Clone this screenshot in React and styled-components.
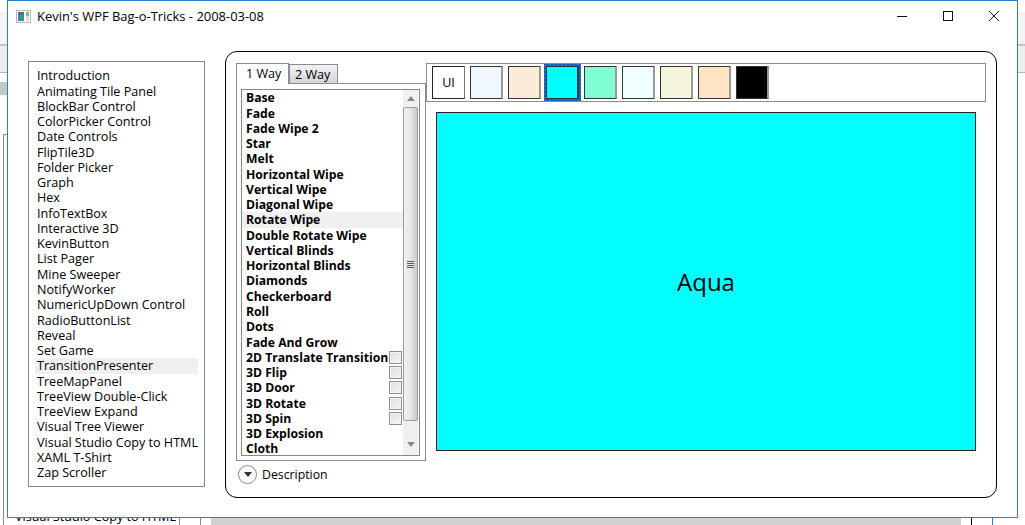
import React from "react";
import styled, { createGlobalStyle } from "styled-components";

const demos = ["Introduction","Animating Tile Panel","BlockBar Control","ColorPicker Control","Date Controls","FlipTile3D","Folder Picker","Graph","Hex","InfoTextBox","Interactive 3D","KevinButton","List Pager","Mine Sweeper","NotifyWorker","NumericUpDown Control","RadioButtonList","Reveal","Set Game","TransitionPresenter","TreeMapPanel","TreeView Double-Click","TreeView Expand","Visual Tree Viewer","Visual Studio Copy to HTML","XAML T-Shirt","Zap Scroller"];
const transitions = [["Base"],["Fade"],["Fade Wipe 2"],["Star"],["Melt"],["Horizontal Wipe"],["Vertical Wipe"],["Diagonal Wipe"],["Rotate Wipe"],["Double Rotate Wipe"],["Vertical Blinds"],["Horizontal Blinds"],["Diamonds"],["Checkerboard"],["Roll"],["Dots"],["Fade And Grow"],["2D Translate Transition",1],["3D Flip",1],["3D Door",1],["3D Rotate",1],["3D Spin",1],["3D Explosion"],["Cloth"]];
const colors = ["#f0f8ff","#faebd7","#00ffff","#7fffd4","#f0ffff","#f5f5dc","#ffe4c4","#000000"];

export default function App() {
  return (
    <>
      <GlobalStyle />
      <Desktop>
        <BackStrip $top={12} $height={32} $left={0} $width={7} />
        <BackBar $left={0} $width={7} />
        <BackStrip $top={12} $height={32} $left={1018} $width={7} />
        <BackBar $left={1018} $width={7} />
        <BackIcon />
        <BackCorner />
        <BackLine $left={179} $top={518} $color="#888" />
        <BackLine $left={200} $top={518} $color="#888" />
        <BackLine $left={971} $top={518} $color="#000" />
        <BackLine $left={992} $top={518} $color="#2b7fd0" />
        <BackGray />
        <BackText>Visual Studio Copy to HTML</BackText>
        <Window>
          <TitleBar>
            <AppIcon viewBox="0 0 15 13">
              <rect x="0.5" y="0.5" width="14" height="12" fill="#fff" stroke="#b9b9b9" />
              <rect x="2" y="2" width="6" height="9" fill="#3f8f9a" />
              <rect x="2" y="2" width="6" height="3" fill="#3f6fa8" />
              <rect x="10" y="2" width="3" height="4" fill="#7fbf8f" />
              <rect x="10" y="6" width="3" height="5" fill="#d5ded5" />
            </AppIcon>
            <Title>Kevin's WPF Bag-o-Tricks - 2008-03-08</Title>
            <Caption>
              <CaptionButton>
                <svg width="12" height="12" viewBox="0 0 12 12"><path d="M1 6.5h10" stroke="#111" fill="none" /></svg>
              </CaptionButton>
              <CaptionButton>
                <svg width="12" height="12" viewBox="0 0 12 12"><rect x="1.5" y="1.5" width="9" height="9" stroke="#111" fill="none" /></svg>
              </CaptionButton>
              <CaptionButton>
                <svg width="12" height="12" viewBox="0 0 12 12"><path d="M1 1l10 10M11 1L1 11" stroke="#111" fill="none" /></svg>
              </CaptionButton>
            </Caption>
          </TitleBar>
          <Body>
            <DemoList>
              {demos.map((d) => (
                <DemoItem key={d} $selected={d === "TransitionPresenter"}>{d}</DemoItem>
              ))}
            </DemoList>
            <Panel>
              <LeftColumn>
                <Tabs>
                  <Tab $active>1 Way</Tab>
                  <Tab>2 Way</Tab>
                </Tabs>
                <TabPanel>
                  <ListFrame>
                    <TransitionList>
                      {transitions.map(([name, check]) => (
                        <TransitionItem key={name} $selected={name === "Rotate Wipe"}>
                          <span>{name}</span>
                          {check && <CheckBox />}
                        </TransitionItem>
                      ))}
                    </TransitionList>
                    <ScrollBar>
                      <ScrollButton $nudge={1}>
                        <svg width="8" height="5" viewBox="0 0 8 5"><path d="M4 0l4 5H0z" fill="#8a8a8a" /></svg>
                      </ScrollButton>
                      <Thumb>
                        <Grip />
                      </Thumb>
                      <ScrollButton $nudge={4}>
                        <svg width="8" height="5" viewBox="0 0 8 5"><path d="M0 0h8L4 5z" fill="#8a8a8a" /></svg>
                      </ScrollButton>
                    </ScrollBar>
                  </ListFrame>
                </TabPanel>
                <Expander>
                  <ExpandCircle>
                    <svg width="8" height="5" viewBox="0 0 8 5"><path d="M0 0h8L4 5z" fill="#333" /></svg>
                  </ExpandCircle>
                  Description
                </Expander>
              </LeftColumn>
              <RightColumn>
                <Toolbar>
                  <UiButton>UI</UiButton>
                  {colors.map((c) => (
                    <Swatch key={c} $color={c} $selected={c === "#00ffff"} />
                  ))}
                </Toolbar>
                <Stage>Aqua</Stage>
              </RightColumn>
            </Panel>
          </Body>
        </Window>
      </Desktop>
    </>
  );
}

const GlobalStyle = createGlobalStyle`
  html, body {
    margin: 0;
    padding: 0;
    overflow: hidden;
    background: #fff;
  }
  * {
    box-sizing: border-box;
  }
`;
const Desktop = styled.div`
  position: relative;
  width: 1025px;
  height: 525px;
  overflow: hidden;
  background: #fff;
  font-family: "Open Sans", "Noto Sans", sans-serif;
  font-size: 12px;
  color: #000;
`;
const BackStrip = styled.div`
  position: absolute;
  top: ${(p) => p.$top}px;
  left: ${(p) => p.$left}px;
  width: ${(p) => p.$width}px;
  height: ${(p) => p.$height}px;
  background: #f2f3f5;
`;
const BackBar = styled.div`
  position: absolute;
  top: 44px;
  left: ${(p) => p.$left}px;
  width: ${(p) => p.$width}px;
  height: 29px;
  background: #eeeeec;
  border-top: 2px solid #c4c4c4;
  border-bottom: 1px solid #b5b5b5;
`;
const BackIcon = styled.div`
  position: absolute;
  top: 82px;
  left: 0;
  width: 7px;
  height: 13px;
  background: #b9cfc4;
  border: 1px solid #c4c4c4;
  border-left: none;
`;
const BackCorner = styled.div`
  position: absolute;
  top: 134px;
  left: 3px;
  bottom: 0;
  width: 4px;
  border-left: 1px solid #888;
  border-top: 1px solid #888;
`;
const BackLine = styled.div`
  position: absolute;
  top: ${(p) => p.$top}px;
  left: ${(p) => p.$left}px;
  bottom: 0;
  width: 1px;
  background: ${(p) => p.$color};
`;
const BackGray = styled.div`
  position: absolute;
  left: 211px;
  right: 64px;
  top: 518px;
  bottom: 0;
  background: #d0d0d0;
`;
const BackText = styled.div`
  position: absolute;
  left: 15px;
  top: 508px;
  white-space: nowrap;
  font-size: 12.6px;
`;
const Window = styled.div`
  position: absolute;
  top: 0;
  left: 7px;
  width: 1011px;
  height: 518px;
  display: flex;
  flex-direction: column;
  background: #fff;
  border: 1px solid #2b7fd0;
`;
const TitleBar = styled.div`
  height: 30px;
  display: flex;
  align-items: center;
  padding-left: 8px;
  flex-shrink: 0;
`;
const AppIcon = styled.svg`
  width: 15px;
  height: 13px;
  margin-right: 6px;
`;
const Title = styled.div`
  flex: 1;
  font-size: 12.95px;
  white-space: nowrap;
`;
const Caption = styled.div`
  display: flex;
`;
const CaptionButton = styled.div`
  width: 46px;
  height: 30px;
  display: flex;
  align-items: center;
  justify-content: center;
`;
const Body = styled.div`
  flex: 1;
  display: flex;
  align-items: flex-start;
  gap: 20px;
  padding: 20px 20px 0 20px;
`;
const DemoList = styled.div`
  width: 177px;
  height: 426px;
  margin-top: 10px;
  padding: 6.3px 6px 0 6px;
  border: 1px solid #828790;
  flex-shrink: 0;
`;
const DemoItem = styled.div`
  height: 15.27px;
  line-height: 15.27px;
  padding-left: 2px;
  white-space: nowrap;
  font-size: 12.6px;
  background: ${(p) => (p.$selected ? "#f0f0f0" : "transparent")};
`;
const Panel = styled.div`
  width: 772px;
  height: 447px;
  display: flex;
  align-items: flex-start;
  padding: 11px 10px 0 10px;
  border: 1px solid #000;
  border-radius: 12px;
`;
const LeftColumn = styled.div`
  width: 190px;
  flex-shrink: 0;
`;
const Tabs = styled.div`
  display: flex;
  height: 20px;
  align-items: flex-end;
`;
const Tab = styled.div`
  height: ${(p) => (p.$active ? 21 : 20)}px;
  margin-bottom: -1px;
  padding: 0 ${(p) => (p.$active ? 9 : 5)}px;
  width: ${(p) => (p.$active ? 53 : 49)}px;
  line-height: 20px;
  font-size: 12.6px;
  white-space: nowrap;
  position: relative;
  z-index: ${(p) => (p.$active ? 1 : 0)};
  border: 1px solid #898c95;
  border-bottom: ${(p) => (p.$active ? "none" : "1px solid #898c95")};
  background: ${(p) => (p.$active ? "#fff" : "linear-gradient(#f3f3f3, #d5d5d5)")};
`;
const TabPanel = styled.div`
  height: 378px;
  padding: 5px 4px 4px 4px;
  border: 1px solid #898c95;
`;
const ListFrame = styled.div`
  display: flex;
  width: 179px;
  height: 367px;
  border: 1px solid #828790;
  overflow: hidden;
`;
const TransitionList = styled.div`
  width: 161px;
  flex-shrink: 0;
  padding-top: 0.3px;
`;
const TransitionItem = styled.div`
  display: flex;
  justify-content: space-between;
  align-items: center;
  height: 15.27px;
  line-height: 15.27px;
  padding-left: 4px;
  font-size: 12.2px;
  font-weight: 700;
  white-space: nowrap;
  background: ${(p) => (p.$selected ? "#f0f0f0" : "transparent")};
`;
const CheckBox = styled.div`
  width: 13px;
  height: 13px;
  margin-right: 1px;
  flex-shrink: 0;
  border: 1px solid #8e8f8f;
  background: linear-gradient(135deg, #dcdcdc, #f6f6f6);
  box-shadow: inset 0 0 0 1px #f4f4f4;
`;
const ScrollBar = styled.div`
  width: 15px;
  display: flex;
  flex-direction: column;
  background: #f0f0f0;
`;
const ScrollButton = styled.div`
  height: 17px;
  flex-shrink: 0;
  display: flex;
  align-items: center;
  justify-content: center;
  padding-bottom: ${(p) => p.$nudge}px;
`;
const Thumb = styled.div`
  width: 15px;
  height: 314px;
  flex-shrink: 0;
  margin-bottom: auto;
  display: flex;
  align-items: center;
  justify-content: center;
  border: 1px solid #9b9b9b;
  border-radius: 2px;
  background: linear-gradient(90deg, #f2f2f2, #e6e6e6 50%, #c9c9c9);
`;
const Grip = styled.div`
  width: 7px;
  height: 7px;
  background: repeating-linear-gradient(#555 0 1px, #eee 1px 2px);
`;
const Expander = styled.div`
  display: flex;
  align-items: center;
  gap: 5px;
  height: 26px;
  padding-left: 2px;
  font-size: 12.3px;
`;
const ExpandCircle = styled.div`
  width: 19px;
  height: 19px;
  display: flex;
  align-items: center;
  justify-content: center;
  border: 1px solid #8a8a8a;
  border-radius: 50%;
  background: #fff;
`;
const RightColumn = styled.div`
  width: 560px;
  flex-shrink: 0;
`;
const Toolbar = styled.div`
  height: 39px;
  display: flex;
  align-items: center;
  gap: 5px;
  padding: 0 0 1px 5px;
  border: 1px solid #898c95;
`;
const UiButton = styled.div`
  width: 33px;
  height: 33px;
  display: flex;
  align-items: center;
  justify-content: center;
  font-size: 12.6px;
  border: 1px solid #222;
  border-right: 1px solid #777;
`;
const Swatch = styled.div`
  width: 33px;
  height: 33px;
  background: ${(p) => p.$color};
  border: 1px solid #333;
  border-right: 2px solid ${(p) => (p.$selected ? "#333" : "#999")};
  outline: ${(p) => (p.$selected ? "2px dotted #0a5fc0" : "none")};
  box-shadow: ${(p) => (p.$selected ? "0 0 0 2px #1673d4" : "none")};
`;
const Stage = styled.div`
  width: 540px;
  height: 339px;
  margin: 10px 0 0 10px;
  display: flex;
  align-items: center;
  justify-content: center;
  background: #00ffff;
  border: 1px solid #222;
  font-size: 24px;
`;
